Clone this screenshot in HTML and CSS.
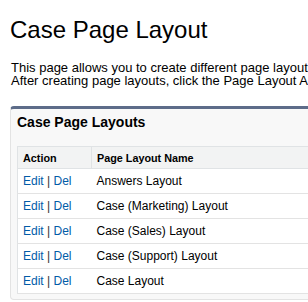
FILE: index.html
```html
<!DOCTYPE html>
<html lang="en">
<head>
    <meta charset="UTF-8">
    <title>Case Page Layout</title>
    <link rel="stylesheet" href="styles.css">
</head>
<body>

    <div class="page">
        <h1 class="page-title">Case Page Layout</h1>
        <p class="intro">
            This page allows you to create different page layouts for cases.<br>
            After creating page layouts, click the Page Layout Assignment button to assign them to profiles.
        </p>

        <!-- Bloco da lista de layouts -->
        <div class="block">
            <h2 class="block-title">Case Page Layouts</h2>
            <table class="list">
                <thead>
                    <tr>
                        <th class="col-action">Action</th>
                        <th>Page Layout Name</th>
                    </tr>
                </thead>
                <tbody>
                    <tr>
                        <td><a href="#">Edit</a> <span class="sep">|</span> <a href="#">Del</a></td>
                        <td>Answers Layout</td>
                    </tr>
                    <tr>
                        <td><a href="#">Edit</a> <span class="sep">|</span> <a href="#">Del</a></td>
                        <td>Case (Marketing) Layout</td>
                    </tr>
                    <tr>
                        <td><a href="#">Edit</a> <span class="sep">|</span> <a href="#">Del</a></td>
                        <td>Case (Sales) Layout</td>
                    </tr>
                    <tr>
                        <td><a href="#">Edit</a> <span class="sep">|</span> <a href="#">Del</a></td>
                        <td>Case (Support) Layout</td>
                    </tr>
                    <tr>
                        <td><a href="#">Edit</a> <span class="sep">|</span> <a href="#">Del</a></td>
                        <td>Case Layout</td>
                    </tr>
                </tbody>
            </table>
        </div>
    </div>

</body>
</html>
```

FILE: styles.css
```css
body {
    font-family: "Liberation Sans", Arial, sans-serif;
    background-color: #fff;
    color: #000;
    margin: 0;
    padding: 0;
    overflow: hidden;
}
.page {
    width: 760px;
    padding: 16px 0 0 10px;
}

/* Titulo */
.page-title {
    font-size: 24px;
    font-weight: normal;
    line-height: 28px;
    margin: 0 0 17px 0;
}
.intro {
    font-size: 13px;
    line-height: 13px;
    margin: 0 0 19px 1px;
    white-space: nowrap;
}

/* Bloco */
.block {
    background-color: #f8f8f8;
    border: 1px solid #e3e3e3;
    border-top: 3px solid #5d6c89;
    border-radius: 4px;
    padding: 0 6px 5px 6px;
}
.block-title {
    font-size: 14px;
    font-weight: bold;
    line-height: 16px;
    margin: 0;
    padding: 5px 0 16px 0;
}

/* Tabela */
.list {
    width: 100%;
    border-collapse: collapse;
    background-color: #fff;
    border: 1px solid #e0e3e5;
}
.list th {
    background-color: #f2f3f3;
    font-size: 10.8px;
    font-weight: bold;
    text-align: left;
    height: 21px;
    padding: 0 2px 0 5px;
    border-bottom: 1px solid #e0e3e5;
    border-left: 1px solid #e0e3e5;
}
.list th.col-action {
    width: 66px;
}
.list td {
    font-size: 12px;
    height: 24px;
    padding: 0 2px 0 5px;
    border-bottom: 1px solid #e3e3e3;
}
.list a {
    color: #015ba7;
    text-decoration: none;
}
.sep {
    color: #333;
}
```
